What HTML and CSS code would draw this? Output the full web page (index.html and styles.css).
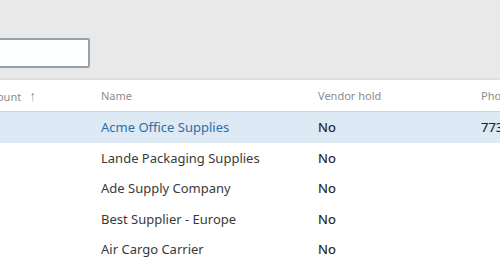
FILE: index.html
```html
<!DOCTYPE html>
<html lang="en">
<head>
  <meta charset="UTF-8">
  <title>Vendors</title>
  <link rel="stylesheet" href="styles.css">
</head>
<body>
  <div class="topo">
    <input class="filtro" type="text">
  </div>

  <div class="lista">
    <div class="linha cabecalho">
      <div class="cel">Vendor account <span class="seta">&#8593;</span></div>
      <div class="cel">Name</div>
      <div class="cel">Vendor hold</div>
      <div class="cel">Phone</div>
    </div>
    <div class="linha selecionada">
      <div class="cel"></div>
      <div class="cel nome">Acme Office Supplies</div>
      <div class="cel valor">No</div>
      <div class="cel valor">773-555-0102</div>
    </div>
    <div class="linha">
      <div class="cel"></div>
      <div class="cel">Lande Packaging Supplies</div>
      <div class="cel valor">No</div>
      <div class="cel"></div>
    </div>
    <div class="linha">
      <div class="cel"></div>
      <div class="cel">Ade Supply Company</div>
      <div class="cel valor">No</div>
      <div class="cel"></div>
    </div>
    <div class="linha">
      <div class="cel"></div>
      <div class="cel">Best Supplier - Europe</div>
      <div class="cel valor">No</div>
      <div class="cel"></div>
    </div>
    <div class="linha">
      <div class="cel"></div>
      <div class="cel">Air Cargo Carrier</div>
      <div class="cel valor">No</div>
      <div class="cel"></div>
    </div>
  </div>
</body>
</html>
```

FILE: styles.css
```css
* {
  margin: 0;
  padding: 0;
  box-sizing: border-box;
}

body {
  width: 500px;
  height: 272px;
  overflow: hidden;
  background-color: #fff;
  font-family: "Noto Sans", "Open Sans", sans-serif;
  color: #3a3a3a;
}

.topo {
  height: 80px;
  padding-top: 38px;
  background-color: #e9e9e9;
  border-bottom: 2px solid #dedede;
}

.filtro {
  display: block;
  width: 130px;
  height: 30px;
  margin-left: -40px;
  background-color: #fcfeff;
  border: 2px solid #95a2aa;
  border-radius: 2px;
  outline: none;
}

.lista {
  margin-left: -60px;
}

.linha {
  display: grid;
  grid-template-columns: 161px 217px 163px 140px;
  height: 30.5px;
  align-items: center;
  font-size: 13px;
}

.cabecalho {
  height: 32px;
  border-bottom: 1px solid #d2d2d2;
  font-size: 11px;
  color: #8c8c8c;
}

.seta {
  display: inline-block;
  margin-left: 5px;
  font-size: 14px;
  transform: scaleX(0.75);
  color: #777;
}

.selecionada {
  background-color: #dde9f5;
}

.nome {
  color: #2d6fa6;
}

.valor {
  color: #222;
  -webkit-text-stroke: 0.15px #222;
}
```
